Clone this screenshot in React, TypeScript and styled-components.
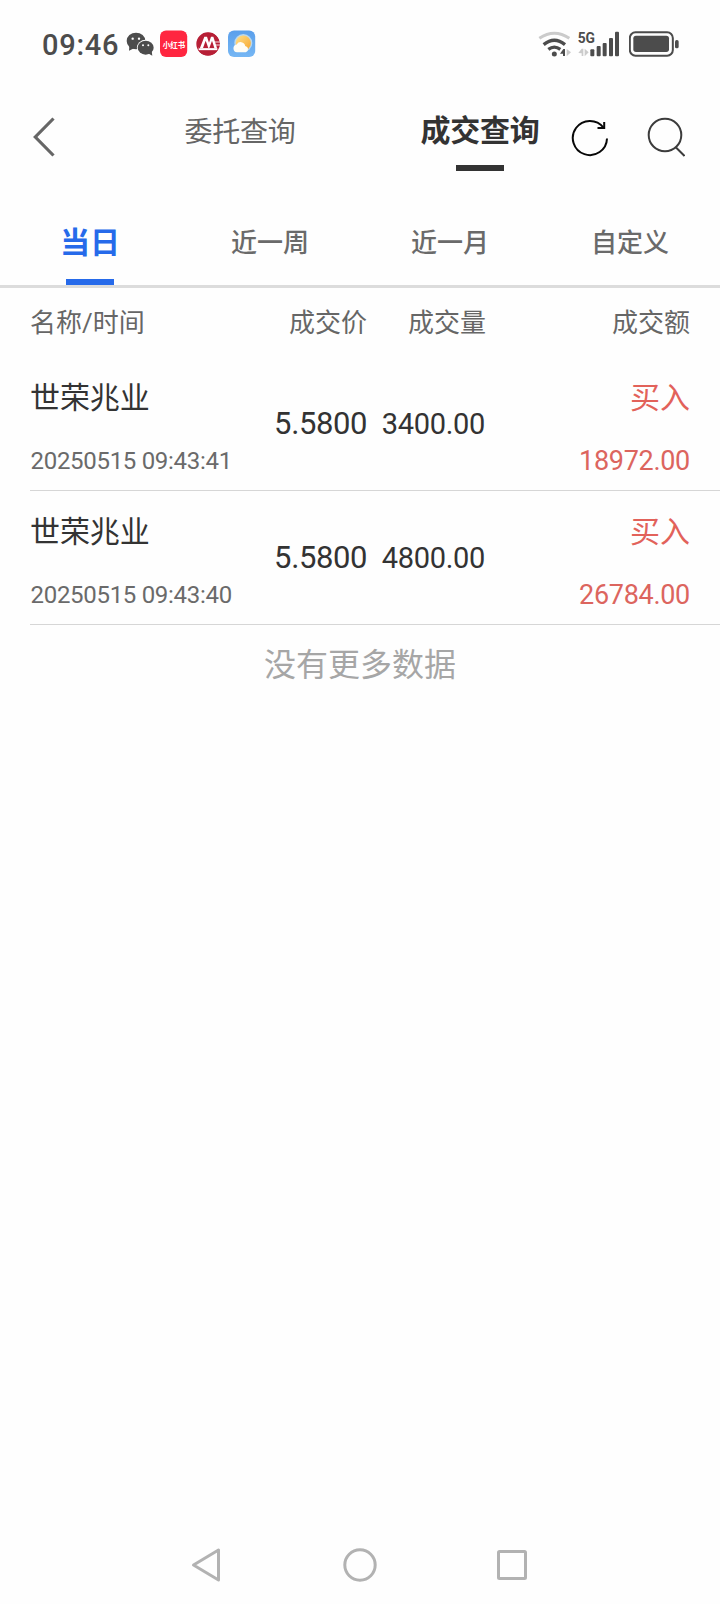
import React from "react";
import styled, { createGlobalStyle } from "styled-components";

const GlobalStyle = createGlobalStyle`
  * { box-sizing: border-box; }
  body {
    margin: 0;
    background: #fefefe;
    font-family: Roboto, "Noto Sans CJK SC", sans-serif;
    color: #333;
  }
  svg { display: block; flex: none; }
`;

const Screen = styled.div`
  width: 720px;
  height: 1604px;
  display: flex;
  flex-direction: column;
  background: #fefefe;
  overflow: hidden;
`;

const StatusBar = styled.div`
  height: 88px;
  display: flex;
  align-items: center;
  justify-content: space-between;
  padding: 0 41px 0 42px;
`;

const StatusGroup = styled.div<{ $gap: number }>`
  display: flex;
  align-items: center;
  gap: ${(p) => p.$gap}px;
`;

const Clock = styled.span`
  width: 77px;
  font-size: 29px;
  line-height: 34px;
  font-weight: 500;
  letter-spacing: 0.75px;
  color: #4c4c4c;
  margin-right: 7px;
  padding-top: 2px;
`;

const Badge = styled.div<{ $gap: number }>`
  margin-left: ${(p) => p.$gap}px;
`;

const Header = styled.div`
  height: 110px;
  display: flex;
  align-items: flex-start;
`;

const IconButton = styled.button<{ $width: number; $top: number; $left: number }>`
  border: 0;
  background: none;
  width: ${(p) => p.$width}px;
  padding: ${(p) => p.$top}px 0 0 ${(p) => p.$left}px;
`;

const TitleTabs = styled.div`
  display: flex;
  gap: 30px;
`;

const TitleTab = styled.div<{ $active?: boolean }>`
  width: ${(p) => (p.$active ? 180 : 240)}px;
  display: flex;
  flex-direction: column;
  align-items: center;
  padding-top: ${(p) => (p.$active ? 21 : 23)}px;
  font-size: ${(p) => (p.$active ? 30 : 28)}px;
  font-weight: ${(p) => (p.$active ? 700 : 400)};
  line-height: 44px;
  letter-spacing: -0.3px;
  color: ${(p) => (p.$active ? "#333" : "#666")};
`;

const Underline = styled.div<{ $color: string; $gap: number }>`
  width: 48px;
  height: 6px;
  margin-top: ${(p) => p.$gap}px;
  background: ${(p) => p.$color};
`;

const RangeTabs = styled.div`
  height: 90px;
  display: grid;
  grid-template-columns: repeat(4, 1fr);
  border-bottom: 3px solid #dcdcdc;
`;

const RangeTab = styled.div<{ $active?: boolean }>`
  display: flex;
  flex-direction: column;
  align-items: center;
  padding-top: 23px;
  line-height: 44px;
  font-size: ${(p) => (p.$active ? 30 : 26)}px;
  font-weight: ${(p) => (p.$active ? 700 : 500)};
  color: ${(p) => (p.$active ? "#266aea" : "#6a6a6a")};
`;

const TableHead = styled.div`
  height: 69px;
  padding: 0 30px;
  display: grid;
  grid-template-columns: 200px 137px 119px 1fr;
  align-items: center;
  font-size: 26px;
  line-height: 40px;
  color: #666;
`;

const HeadCell = styled.span<{ $right?: boolean }>`
  text-align: ${(p) => (p.$right ? "right" : "left")};
`;

const TradeRow = styled.div`
  height: 134px;
  margin-left: 30px;
  padding-right: 30px;
  display: grid;
  grid-template-columns: 230px 107px 118px 1fr;
  border-bottom: 1px solid #d6d6d6;
`;

const Stack = styled.div<{ $end?: boolean }>`
  display: flex;
  flex-direction: column;
  align-items: ${(p) => (p.$end ? "flex-end" : "flex-start")};
  padding-top: 20px;
  gap: 20px;
  white-space: nowrap;
`;

const StockName = styled.span`
  font-size: 30px;
  line-height: 42px;
  letter-spacing: -0.1px;
`;

const TradeTime = styled.span`
  padding-left: 0.5px;
  font-size: 24px;
  line-height: 44px;
  letter-spacing: -0.3px;
  color: #6a6a6a;
`;

const Side = styled.span`
  font-size: 30px;
  line-height: 42px;
  color: #e2625a;
`;

const Amount = styled.span`
  font-size: 27px;
  line-height: 44px;
  letter-spacing: -0.3px;
  color: #dc655e;
`;

const Figure = styled.span<{ $size: number; $spacing: number }>`
  align-self: center;
  text-align: right;
  white-space: nowrap;
  font-size: ${(p) => p.$size}px;
  line-height: 40px;
  letter-spacing: ${(p) => p.$spacing}px;
`;

const EndNote = styled.div`
  padding-top: 17px;
  text-align: center;
  font-size: 32px;
  line-height: 46px;
  color: #a6a6a6;
`;

const NavBar = styled.div`
  margin-top: auto;
  height: 78px;
  padding: 0 191px 0 190px;
  display: flex;
  align-items: center;
  justify-content: space-between;
`;

const WeChatIcon = () => (
  <svg width="28" height="25" viewBox="286 36 84 75">
    <g fill="#4c4c4c">
      <ellipse cx="316" cy="63" rx="28" ry="25" />
      <path d="M296 78l-1 14 15-7z" />
      <ellipse cx="345" cy="83" rx="26.500" ry="23.500" fill="#fefefe" />
      <ellipse cx="345" cy="83" rx="24" ry="21" />
      <path d="M352 100l13 7-2-14z" />
    </g>
    <g fill="#fefefe">
      <circle cx="306" cy="56" r="3.500" />
      <circle cx="325" cy="56" r="3.500" />
      <circle cx="337" cy="76" r="3" />
      <circle cx="353" cy="76" r="3" />
    </g>
  </svg>
);

const RedNoteIcon = () => (
  <svg width="28" height="28" viewBox="0 0 28 28">
    <rect x="0" y="0.500" width="27.200" height="26.500" rx="6" fill="#ff2640" />
    <text
      x="2.700"
      y="17.500"
      textLength="22.500"
      lengthAdjust="spacingAndGlyphs"
      fontSize="8.400"
      fontWeight="700"
      fontFamily="Noto Sans CJK SC, sans-serif"
      fill="#fff"
    >
      小红书
    </text>
  </svg>
);

const BankIcon = () => (
  <svg width="24" height="24" viewBox="498 36 72 72">
    <circle cx="534" cy="72" r="33" fill="#fff" stroke="#b71f36" strokeWidth="4" />
    <path d="M503 86A34 34 0 0 0 565 86z" fill="#b71f36" />
    <path d="M534 38A34 34 0 0 0 502 80L509 86L523 50H531L537 68L543 50H550L561 84H567A34 34 0 0 0 534 38z" fill="#b71f36" />
    <path d="M519 84L527 62L535 84z" fill="#b71f36" />
    <path d="M538 84L546 62L553 84z" fill="#b71f36" />
    <path d="M506 88H562" stroke="#fff" strokeWidth="5" />
    <path d="M554 66h16M557 75h13" stroke="#fff" strokeWidth="2.500" />
  </svg>
);

const WeatherIcon = () => (
  <svg width="28" height="28" viewBox="0 0 28 28">
    <defs>
      <linearGradient id="sky" x1="0" y1="0" x2="0" y2="1">
        <stop offset="0" stopColor="#5a9feb" />
        <stop offset="1" stopColor="#76b7f4" />
      </linearGradient>
      <linearGradient id="sun" x1="0" y1="0" x2="1" y2="1">
        <stop offset="0" stopColor="#ffe08a" />
        <stop offset="1" stopColor="#f6a62c" />
      </linearGradient>
    </defs>
    <rect x="0" y="0.500" width="27.200" height="26.500" rx="6" fill="url(#sky)" />
    <circle cx="15.300" cy="13" r="9" fill="#b9d8ee" />
    <circle cx="15.300" cy="13" r="7.600" fill="url(#sun)" />
    <path
      d="M9 22.300a4 4 0 0 1-.3-7.900 4.600 4.600 0 0 1 8.500 1.500 3.300 3.300 0 0 1 .6 6.400z"
      fill="#fffdf5"
    />
  </svg>
);

const WifiIcon = () => (
  <svg width="34" height="28" viewBox="53 30 102 84">
    <g fill="none" strokeWidth="9">
      <path d="M57 55Q102 25 147 55" stroke="#cbcbcb" />
      <path d="M70 74Q102 48 134 74" stroke="#4c4c4c" strokeWidth="10" />
      <path d="M84 88Q102 75 120 88" stroke="#4c4c4c" strokeWidth="10" />
    </g>
    <circle cx="102" cy="102" r="7.500" fill="#4c4c4c" />
    <path d="M119 101L129 87H134V108H128V101z" fill="#4c4c4c" />
    <path d="M139 87V109L152 97z" fill="#cbcbcb" />
  </svg>
);

const SignalIcon = () => (
  <svg width="42" height="28" viewBox="172 30 126 84">
    <text
      x="171"
      y="68"
      textLength="52"
      lengthAdjust="spacingAndGlyphs"
      fontSize="46"
      fontWeight="700"
      fontFamily="Roboto, sans-serif"
      fill="#4c4c4c"
    >
      5G
    </text>
    <path d="M173 99L183 86H188V108H183V100zM192 86V109L204 97z" fill="#cbcbcb" />
    <g fill="#4c4c4c">
      <rect x="209" y="88" width="12" height="21" rx="3" />
      <rect x="228" y="78" width="12" height="31" rx="3" />
      <rect x="246" y="69" width="12" height="40" rx="3" />
      <rect x="265" y="54" width="12" height="55" rx="3" />
      <rect x="283" y="35" width="12" height="74" rx="3" />
    </g>
  </svg>
);

const BatteryIcon = () => (
  <svg width="50" height="28" viewBox="327 30 150 84">
    <rect x="329.500" y="37" width="129" height="70" rx="17" fill="none" stroke="#4c4c4c" strokeWidth="6" />
    <rect x="340" y="47" width="107" height="49" rx="8" fill="#4c4c4c" />
    <rect x="465" y="60" width="11" height="25" rx="5" fill="#4c4c4c" />
  </svg>
);

const BackIcon = () => (
  <svg width="22" height="40" viewBox="0 0 22 40">
    <path d="M20.500 1.500L2.300 20L20.500 38.500" fill="none" stroke="#666" strokeWidth="3.200" />
  </svg>
);

const RefreshIcon = () => (
  <svg width="38" height="40" viewBox="0 0 38 40">
    <g fill="none" stroke="#080808" strokeWidth="2">
      <path d="M36 19.500A17.100 17.100 0 1 1 32.500 8.600" />
      <path d="M33.200 3V9H26.500" />
    </g>
  </svg>
);

const SearchIcon = () => (
  <svg width="38" height="40" viewBox="0 0 38 40">
    <g fill="none" stroke="#3c3c3c" strokeWidth="2">
      <circle cx="18" cy="18" r="16.300" />
      <path d="M29 30.500L37.500 39" />
    </g>
  </svg>
);

const NavBackIcon = () => (
  <svg width="34" height="36" viewBox="0 0 34 36">
    <path d="M28.500 3V33L3.500 18z" fill="none" stroke="#b2b2b2" strokeWidth="3" strokeLinejoin="round" />
  </svg>
);

const NavHomeIcon = () => (
  <svg width="34" height="36" viewBox="0 0 34 36">
    <circle cx="17" cy="18" r="15.200" fill="none" stroke="#b2b2b2" strokeWidth="3" />
  </svg>
);

const NavRecentIcon = () => (
  <svg width="34" height="36" viewBox="0 0 34 36">
    <rect x="3.500" y="4.500" width="27" height="27" rx="1" fill="none" stroke="#b2b2b2" strokeWidth="3" />
  </svg>
);

const ranges = ["当日", "近一周", "近一月", "自定义"];

const trades = [
  { name: "世荣兆业", time: "20250515 09:43:41", price: "5.5800", volume: "3400.00", side: "买入", amount: "18972.00" },
  { name: "世荣兆业", time: "20250515 09:43:40", price: "5.5800", volume: "4800.00", side: "买入", amount: "26784.00" },
];

export default function App() {
  return (
    <>
      <GlobalStyle />
      <Screen>
        <StatusBar>
          <StatusGroup $gap={0}>
            <Clock>09:46</Clock>
            <Badge $gap={0}><WeChatIcon /></Badge>
            <Badge $gap={6}><RedNoteIcon /></Badge>
            <Badge $gap={8}><BankIcon /></Badge>
            <Badge $gap={8}><WeatherIcon /></Badge>
          </StatusGroup>
          <StatusGroup $gap={9}>
            <StatusGroup $gap={6}>
              <WifiIcon />
              <SignalIcon />
            </StatusGroup>
            <BatteryIcon />
          </StatusGroup>
        </StatusBar>

        <Header>
          <IconButton $width={120} $top={29} $left={33} aria-label="返回"><BackIcon /></IconButton>
          <TitleTabs>
            <TitleTab>委托查询</TitleTab>
            <TitleTab $active>
              成交查询
              <Underline $color="#333" $gap={12} />
            </TitleTab>
          </TitleTabs>
          <IconButton $width={76} $top={31} $left={1} aria-label="刷新"><RefreshIcon /></IconButton>
          <IconButton $width={44} $top={29} $left={1} aria-label="搜索"><SearchIcon /></IconButton>
        </Header>

        <RangeTabs>
          {ranges.map((label, i) => (
            <RangeTab key={label} $active={i === 0}>
              {label}
              {i === 0 && <Underline $color="#266aea" $gap={14} />}
            </RangeTab>
          ))}
        </RangeTabs>

        <TableHead>
          <HeadCell>名称/时间</HeadCell>
          <HeadCell $right>成交价</HeadCell>
          <HeadCell $right>成交量</HeadCell>
          <HeadCell $right>成交额</HeadCell>
        </TableHead>

        {trades.map((t) => (
          <TradeRow key={t.time}>
            <Stack>
              <StockName>{t.name}</StockName>
              <TradeTime>{t.time}</TradeTime>
            </Stack>
            <Figure $size={31} $spacing={-0.4}>{t.price}</Figure>
            <Figure $size={29} $spacing={-0.3}>{t.volume}</Figure>
            <Stack $end>
              <Side>{t.side}</Side>
              <Amount>{t.amount}</Amount>
            </Stack>
          </TradeRow>
        ))}

        <EndNote>没有更多数据</EndNote>

        <NavBar>
          <NavBackIcon />
          <NavHomeIcon />
          <NavRecentIcon />
        </NavBar>
      </Screen>
    </>
  );
}
